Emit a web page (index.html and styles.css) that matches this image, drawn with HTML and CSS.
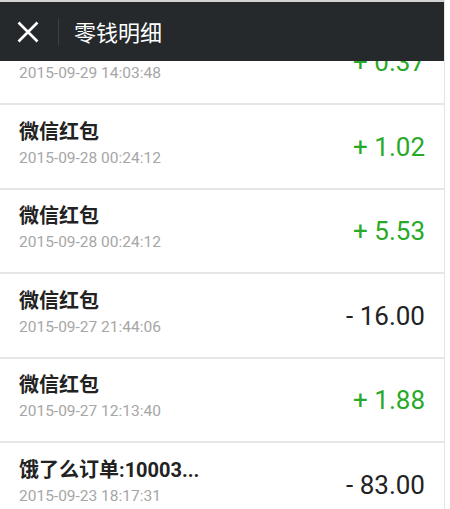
FILE: index.html
```html
<!DOCTYPE html>
<html lang="zh-CN">
<head>
    <meta charset="UTF-8">
    <meta name="viewport" content="width=device-width, initial-scale=1.0">
    <title>零钱明细</title>
    <link rel="stylesheet" href="styles.css">
</head>
<body>
    <div class="screen">
        <div class="topbar">
            <span class="close">
                <svg width="22" height="22" viewBox="0 0 22 22">
                    <path d="M1.5 1.5 L20.5 20.5 M20.5 1.5 L1.5 20.5" stroke="#fff" stroke-width="2.6" fill="none"/>
                </svg>
            </span>
            <span class="sep"></span>
            <span class="title">零钱明细</span>
        </div>

        <div class="list">
            <!-- first row is scrolled under the bar, only its lower half shows -->
            <div class="row">
                <div class="info">
                    <div class="name">&nbsp;</div>
                    <div class="time">2015-09-29 14:03:48</div>
                </div>
                <div class="amount plus">+ 0.37</div>
            </div>
            <div class="row">
                <div class="info">
                    <div class="name">微信红包</div>
                    <div class="time">2015-09-28 00:24:12</div>
                </div>
                <div class="amount plus">+ 1.02</div>
            </div>
            <div class="row">
                <div class="info">
                    <div class="name">微信红包</div>
                    <div class="time">2015-09-28 00:24:12</div>
                </div>
                <div class="amount plus">+ 5.53</div>
            </div>
            <div class="row">
                <div class="info">
                    <div class="name">微信红包</div>
                    <div class="time">2015-09-27 21:44:06</div>
                </div>
                <div class="amount">- 16.00</div>
            </div>
            <div class="row">
                <div class="info">
                    <div class="name">微信红包</div>
                    <div class="time">2015-09-27 12:13:40</div>
                </div>
                <div class="amount plus">+ 1.88</div>
            </div>
            <div class="row">
                <div class="info">
                    <div class="name">饿了么订单:10003...</div>
                    <div class="time">2015-09-23 18:17:31</div>
                </div>
                <div class="amount">- 83.00</div>
            </div>
        </div>
    </div>
</body>
</html>
```

FILE: styles.css
```css
html, body {
    margin: 0;
    padding: 0;
    background: #fff;
    overflow: hidden;
}
body {
    font-family: Roboto, "Noto Sans CJK SC", sans-serif;
    height: 509px;
}
.screen {
    position: relative;
    width: 444px;
    height: 509px;
    border-right: 1px solid #e4e4e4;
    overflow: hidden;
}
.screen::before {
    content: "";
    position: absolute;
    top: 0;
    left: 0;
    right: 0;
    height: 2px;
    background: #d2d2d2;
    z-index: 3;
}
.topbar {
    position: absolute;
    top: 2px;
    left: 0;
    right: 0;
    height: 59px;
    background: #25292b;
    display: flex;
    align-items: center;
    z-index: 2;
}
.close {
    display: flex;
    margin-left: 17px;
    margin-top: 1px;
}
.sep {
    width: 1px;
    height: 26px;
    background: #3b4042;
    margin-left: 19px;
}
.title {
    font-family: "Noto Sans CJK SC", sans-serif;
    color: #fff;
    font-size: 22px;
    margin-left: 15px;
    margin-top: -1px;
}
.list {
    padding-top: 20.5px;
}
.row {
    height: 82.5px;
    border-bottom: 2px solid #e6e6e6;
    display: flex;
    align-items: center;
    justify-content: space-between;
    padding: 0 19px 0 19px;
}
.info {
    margin-top: -4px;
}
.name {
    font-size: 20px;
    font-weight: bold;
    color: #222;
    line-height: 27px;
}
.time {
    font-size: 15.5px;
    color: #a6a6a6;
    line-height: 24px;
}
.amount {
    font-size: 26px;
    color: #222;
    margin-top: 1px;
}
.amount.plus {
    color: #28aa28;
}
```
